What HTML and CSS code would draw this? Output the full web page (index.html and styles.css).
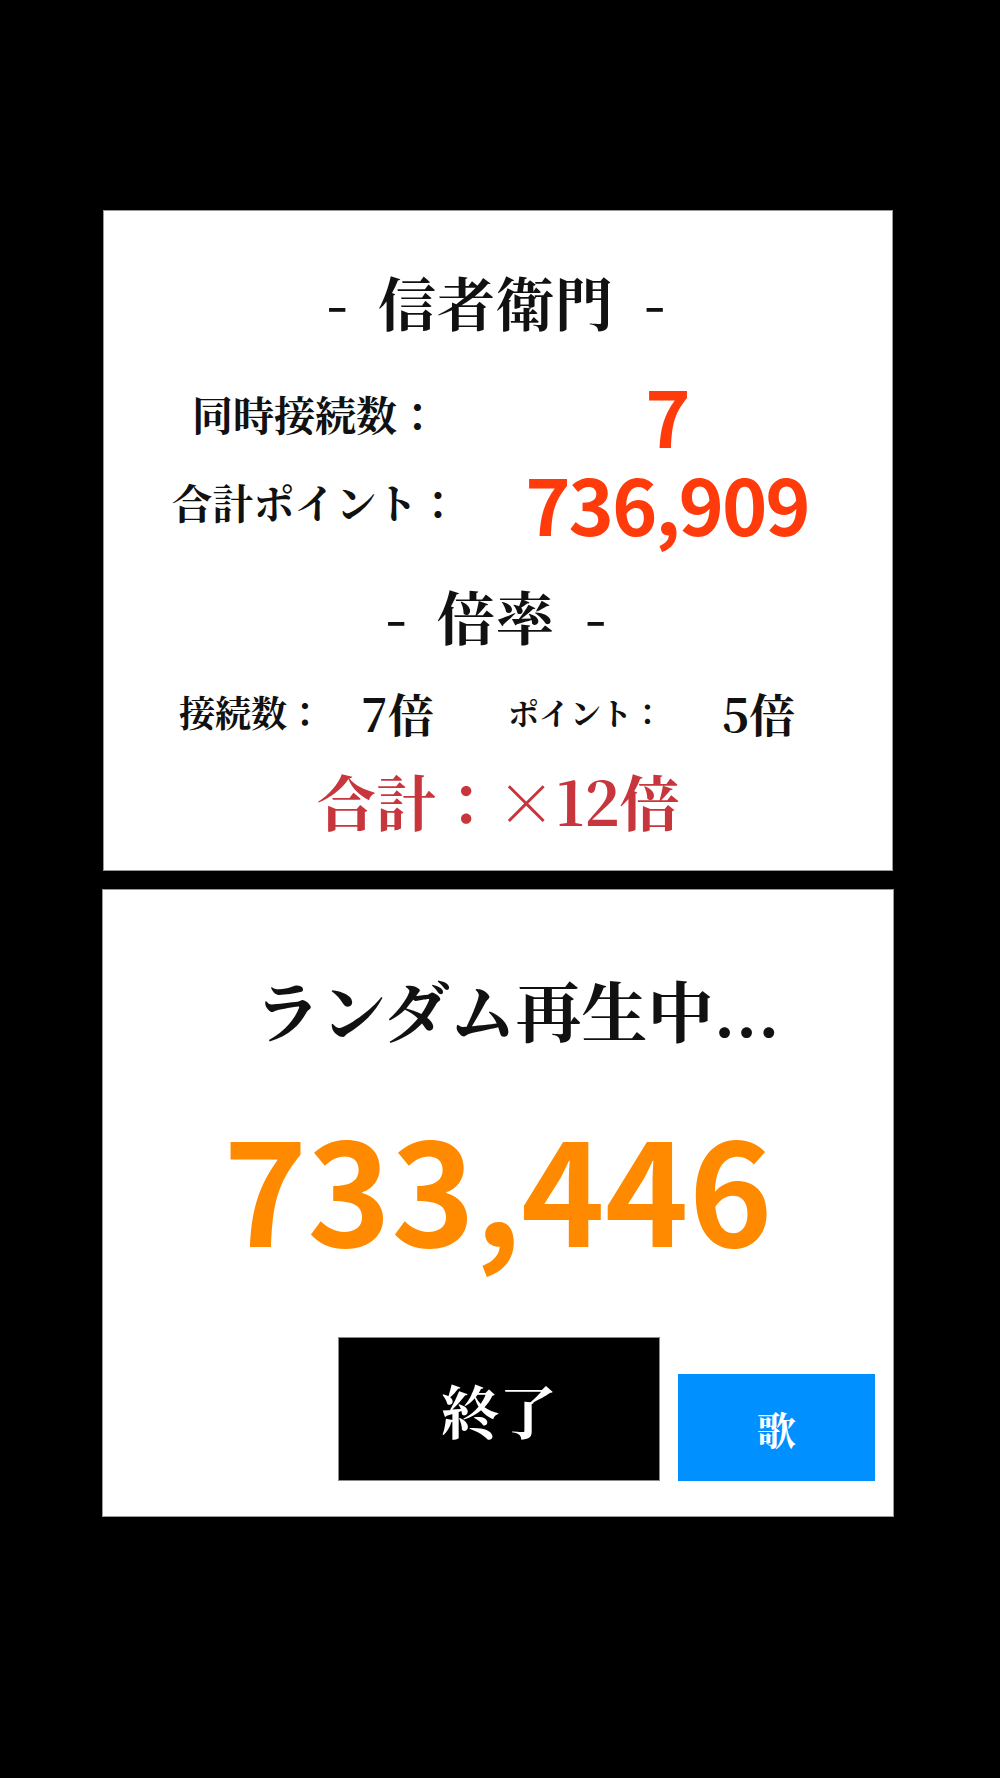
FILE: index.html
```html
<!DOCTYPE html>
<html lang="ja">
<head>
<meta charset="utf-8">
<title>ランダム再生</title>
<link rel="stylesheet" href="styles.css">
</head>
<body>
<main class="screen">
  <section class="card card-top">
    <h1 class="heading"><span class="dash">-</span><span class="heading-text">信者衛門</span><span class="dash">-</span></h1>
    <div class="stats">
      <div class="stat-label">同時接続数：</div>
      <div class="stat-value">7</div>
      <div class="stat-label">合計ポイント：</div>
      <div class="stat-value">736,909</div>
    </div>
    <h2 class="heading heading-rate"><span class="dash">-</span><span class="heading-text">倍率</span><span class="dash">-</span></h2>
    <div class="rates">
      <div class="rate-label">接続数：</div>
      <div class="rate-value">7倍</div>
      <div class="rate-label rate-label-small">ポイント：</div>
      <div class="rate-value">5倍</div>
    </div>
    <div class="total">合計：×12倍</div>
  </section>
  <section class="card card-bottom">
    <div class="playing">ランダム再生中...</div>
    <div class="counter">733,446</div>
    <div class="actions">
      <button class="btn btn-end" type="button">終了</button>
      <button class="btn btn-song" type="button">歌</button>
    </div>
  </section>
</main>
</body>
</html>
```

FILE: styles.css
```css
html, body {
  margin: 0;
  padding: 0;
  background: #000;
}

body {
  width: 1000px;
  height: 1778px;
  overflow: hidden;
  font-family: "Noto Serif CJK JP", "Noto Sans CJK JP", serif;
  color: #111;
}

.screen {
  padding-top: 210px;
}

.card {
  background: #fff;
  box-sizing: border-box;
  border: 1px solid #9a9a9a;
}

.card-top {
  margin-left: 103px;
  width: 790px;
  height: 661px;
  padding-top: 61px;
}

.card-bottom {
  margin-left: 102px;
  margin-top: 18px;
  width: 792px;
  height: 628px;
  display: flex;
  flex-direction: column;
  padding-bottom: 35px;
}

.heading {
  margin: 0;
  display: flex;
  justify-content: center;
  align-items: center;
  font-size: 58px;
  line-height: 58px;
  height: 58px;
  font-weight: 700;
  padding-right: 4px;
}

.dash {
  font-weight: 700;
  margin: 0 30px;
}

.heading-text {
  letter-spacing: 1px;
}

.stats {
  margin-top: 40px;
  margin-left: 35px;
  display: grid;
  grid-template-columns: 352px 352px;
  grid-auto-rows: 88px;
  align-items: center;
  text-align: center;
}

.stat-label {
  font-size: 41px;
  line-height: 50px;
  font-weight: 700;
}

.stat-value {
  font-family: "Noto Sans CJK JP", sans-serif;
  font-size: 77px;
  line-height: 77px;
  font-weight: 700;
  letter-spacing: -2px;
  color: #ff3b0b;
}

.heading-rate {
  margin-top: 40px;
}

.rates {
  margin-top: 38px;
  margin-left: 75px;
  height: 60px;
  display: grid;
  grid-template-columns: 182px 147px 214px auto;
  align-items: center;
}

.rate-label {
  font-size: 36px;
  line-height: 60px;
  font-weight: 700;
}

.rate-label-small {
  font-size: 31px;
}

.rate-value {
  font-size: 46px;
  line-height: 60px;
  font-weight: 700;
}

.total {
  margin-top: 28px;
  text-align: center;
  font-size: 60px;
  line-height: 60px;
  font-weight: 700;
  color: #c8363d;
}

.playing {
  margin-top: 86px;
  padding-left: 38px;
  text-align: center;
  font-size: 66px;
  line-height: 66px;
  font-weight: 700;
  color: #111;
}

.counter {
  margin-top: 72px;
  text-align: center;
  font-family: "Noto Sans CJK JP", sans-serif;
  font-size: 142px;
  line-height: 142px;
  font-weight: 700;
  color: #ff8a00;
}

.actions {
  margin-top: auto;
  display: flex;
  justify-content: flex-end;
  align-items: flex-end;
  gap: 18px;
  padding-right: 18px;
}

.btn {
  border: 0;
  margin: 0;
  padding: 0;
  font-family: "Noto Serif CJK JP", "Noto Sans CJK JP", serif;
  color: #fff;
  display: flex;
  align-items: center;
  justify-content: center;
  cursor: pointer;
}

.btn-end {
  width: 322px;
  height: 144px;
  background: #000;
  border: 1px solid #8a8a8a;
  font-size: 58px;
  font-weight: 700;
}

.btn-song {
  width: 197px;
  height: 107px;
  background: #0090ff;
  font-size: 39px;
  font-weight: 700;
}
```
